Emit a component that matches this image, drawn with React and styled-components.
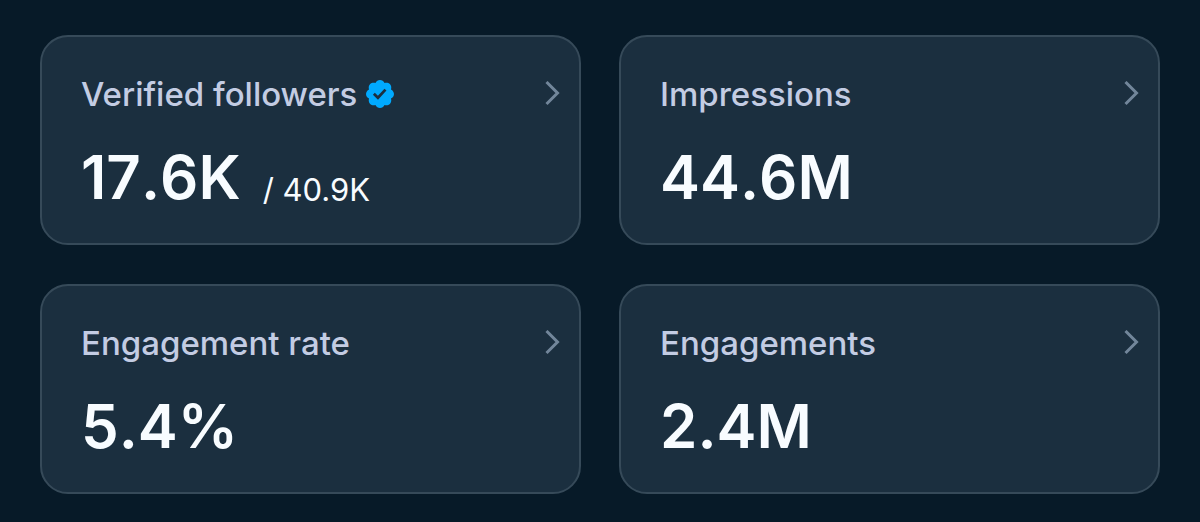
import styled, { createGlobalStyle } from "styled-components";

const COLORS = {
  NAVY: "#071a28",
  CARD: "#1b2f3f",
  BORDER: "#364a59",
  LABEL: "#c3cce3",
  WHITE: "#f8fcff",
  BLUE: "#00aaff",
  CHEVRON: "#72869a",
};

const stats = [
  { label: "Verified followers", value: "17.6K", total: "40.9K", verified: true },
  { label: "Impressions", value: "44.6M" },
  { label: "Engagement rate", value: "5.4%" },
  { label: "Engagements", value: "2.4M" },
];

export default function App() {
  return (
    <>
      <GlobalStyle />
      <StatsGrid>
        {stats.map((s) => (
          <StatCard key={s.label} stat={s} />
        ))}
      </StatsGrid>
    </>
  );
}

function StatCard({ stat }) {
  const { label, value, total, verified } = stat;

  return (
    <Card href="#">
      <Header>
        <Label>{label}</Label>
        {verified && <VerifiedBadge />}
        <Chevron viewBox="0 0 16 26" aria-hidden="true">
          <path d="M2 1l11 11L2 23" />
        </Chevron>
      </Header>
      <Numbers>
        <Value>{value}</Value>
        {total && <Total>/ {total}</Total>}
      </Numbers>
    </Card>
  );
}

function VerifiedBadge() {
  return (
    <Badge viewBox="1 1 22 22" role="img" aria-label="Verified">
      <path d="M22.25 12c0-1.43-.88-2.67-2.19-3.34.46-1.39.2-2.9-.81-3.91s-2.52-1.27-3.91-.81c-.66-1.31-1.91-2.19-3.34-2.19s-2.67.88-3.33 2.19c-1.4-.46-2.91-.2-3.92.81s-1.26 2.52-.8 3.91c-1.31.67-2.2 1.91-2.2 3.34s.89 2.67 2.2 3.34c-.46 1.39-.21 2.9.8 3.91s2.52 1.26 3.91.81c.67 1.31 1.91 2.19 3.34 2.19s2.68-.88 3.34-2.19c1.39.45 2.9.2 3.91-.81s1.27-2.52.81-3.91c1.31-.67 2.19-1.91 2.19-3.34zm-11.71 4.2L6.8 12.46l1.41-1.42 2.26 2.26 4.8-5.23 1.47 1.36-6.2 6.77z" />
    </Badge>
  );
}

const GlobalStyle = createGlobalStyle`
  * {
    box-sizing: border-box;
  }

  body {
    margin: 0;
    background-color: ${COLORS.NAVY};
    font-family: "Inter", sans-serif;
  }
`;

const StatsGrid = styled.main`
  display: grid;
  grid-template-columns: repeat(2, minmax(0, 1fr));
  gap: 39px 38px;
  padding: 35px 40px 28px;
`;

const Card = styled.a`
  display: flex;
  flex-direction: column;
  gap: 26px;
  padding: 37px 18px 29px 39px;
  border: 2px solid ${COLORS.BORDER};
  border-radius: 28px;
  background-color: ${COLORS.CARD};
  text-decoration: none;
`;

const Header = styled.div`
  display: flex;
  align-items: center;
  gap: 8px;
`;

const Label = styled.span`
  font-size: 33px;
  font-weight: 500;
  line-height: 40px;
  color: ${COLORS.LABEL};
`;

const Badge = styled.svg`
  width: 30px;
  height: 30px;
  fill: ${COLORS.BLUE};
`;

const Chevron = styled.svg`
  width: 17px;
  height: 26px;
  margin-left: auto;
  fill: none;
  stroke: ${COLORS.CHEVRON};
  stroke-width: 3;
`;

const Numbers = styled.div`
  display: flex;
  align-items: flex-end;
  gap: 22px;
`;

const Value = styled.strong`
  font-size: 60px;
  font-weight: 600;
  font-kerning: none;
  line-height: 74px;
  color: ${COLORS.WHITE};
`;

const Total = styled.span`
  font-size: 31px;
  line-height: 48px;
  color: ${COLORS.WHITE};
`;
